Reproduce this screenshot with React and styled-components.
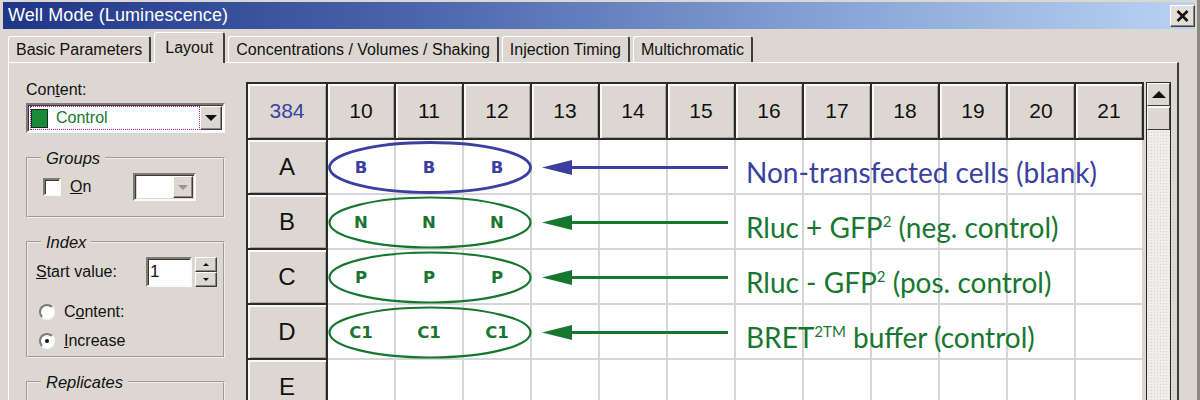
import styled, { createGlobalStyle } from 'styled-components';

const GlobalStyle = createGlobalStyle`
  body {
    margin: 0;
    background: #dcd8d1;
    font-family: "Liberation Sans", Arial, sans-serif;
  }
`;

const BG = '#dcd8d1';
const BLUE = '#3b40a0';
const GREEN = '#17772f';

const Window = styled.div`
  width: 1200px;
  height: 400px;
  box-sizing: border-box;
  overflow: hidden;
  background: ${BG};
  padding: 2px 2px 0 3px;
  border-right: 3px solid #8d8a84;
`;

const TitleBar = styled.div`
  height: 27px;
  display: flex;
  align-items: center;
  justify-content: space-between;
  padding: 0 0 0 5px;
  background: linear-gradient(to right, #1f3587 0%, #4a66ad 35%, #86a5d6 70%, #bad2f2 100%);
`;

const Title = styled.span`
  color: #fff;
  font-size: 18px;
  letter-spacing: 0.1px;
`;

const CloseButton = styled.div`
  width: 25px;
  height: 22px;
  box-sizing: border-box;
  background: #e2dfd8;
  border: 1px solid;
  border-color: #fff #404040 #404040 #fff;
  box-shadow: inset -1px -1px 0 #8a8680;
  display: flex;
  align-items: center;
  justify-content: center;
`;

const TabStrip = styled.div`
  height: 33px;
  display: flex;
  align-items: flex-end;
  gap: 3px;
  padding-left: 5px;
`;

const Tab = styled.div`
  height: ${(p) => (p.$active ? '31px' : '26px')};
  box-sizing: border-box;
  padding: 0 ${(p) => (p.$active ? '10px' : '7px')};
  display: flex;
  align-items: center;
  font-size: 16px;
  color: #111;
  background: ${BG};
  border-top: 1px solid #fff;
  border-left: 1px solid #fff;
  border-right: 2px solid #3d3d3d;
  border-radius: 3px 3px 0 0;
  position: relative;
  margin-bottom: ${(p) => (p.$active ? '-1px' : '0')};
  z-index: ${(p) => (p.$active ? 1 : 0)};
`;

const Panel = styled.div`
  margin-left: 5px;
  width: 1171px;
  height: 400px;
  box-sizing: border-box;
  border-top: 1px solid #fff;
  border-left: 1px solid #fff;
  border-right: 2px solid #3d3d3d;
  display: flex;
`;

const Sidebar = styled.div`
  width: 237px;
  flex-shrink: 0;
  box-sizing: border-box;
  padding: 18px 0 0 17px;
  display: flex;
  flex-direction: column;
  font-size: 16px;
  color: #111;
`;

const FieldLabel = styled.div`
  line-height: 18px;
`;

const Sunken = styled.div`
  box-sizing: border-box;
  background: #fff;
  border: 2px solid;
  border-color: #7d7a75 #fbfaf8 #fbfaf8 #7d7a75;
  box-shadow: inset 1px 1px 0 #3a3a3a;
`;

const ComboBox = styled(Sunken)`
  margin-top: ${(p) => p.$mt || 0}px;
  margin-left: ${(p) => p.$ml || 0}px;
  width: ${(p) => p.$width}px;
  height: ${(p) => p.$height}px;
  display: flex;
  padding: 1px 1px 1px 2px;
  background: ${(p) => (p.$disabled ? BG : '#fff')};
`;

const ComboField = styled.div`
  flex: 1;
  display: flex;
  align-items: center;
  gap: 8px;
  background: #fff;
  outline: ${(p) => (p.$focus ? '1px dotted #b01ab0' : 'none')};
  outline-offset: -1px;
  padding-left: 1px;
  color: ${GREEN};
  font-size: 16px;
`;

const Swatch = styled.span`
  width: 17px;
  height: 19px;
  background: #198a3a;
  border: 1px solid #1b2b1b;
  box-sizing: border-box;
`;

const ArrowButton = styled.div`
  width: ${(p) => p.$w || 22}px;
  box-sizing: border-box;
  background: ${BG};
  border: 1px solid;
  border-color: #fff #3d3d3d #3d3d3d #fff;
  box-shadow: inset -1px -1px 0 #8a8680;
  display: flex;
  align-items: center;
  justify-content: center;
`;

const DownTriangle = styled.span`
  width: 0;
  height: 0;
  border-left: ${(p) => p.$s || 6}px solid transparent;
  border-right: ${(p) => p.$s || 6}px solid transparent;
  border-top: ${(p) => p.$s || 6}px solid ${(p) => p.$color || '#111'};
`;

const UpTriangle = styled.span`
  width: 0;
  height: 0;
  border-left: ${(p) => p.$s || 6}px solid transparent;
  border-right: ${(p) => p.$s || 6}px solid transparent;
  border-bottom: ${(p) => p.$s || 6}px solid ${(p) => p.$color || '#111'};
`;

const GroupBox = styled.fieldset`
  margin: ${(p) => p.$top}px 0 0 0;
  width: 199px;
  box-sizing: border-box;
  padding: 0;
  border: 2px groove #f1eee9;
  min-width: 0;
`;

const Legend = styled.legend`
  margin-left: 13px;
  padding: 0 5px;
  font-style: italic;
  font-size: 16.5px;
  line-height: 18px;
  color: #111;
`;

const GroupRow = styled.div`
  display: flex;
  align-items: center;
  padding: ${(p) => p.$pad};
  gap: ${(p) => p.$gap || 0}px;
`;

const CheckBox = styled(Sunken)`
  width: 18px;
  height: 18px;
`;

const RowLabel = styled.span`
  margin-left: ${(p) => p.$ml || 0}px;
  margin-right: ${(p) => p.$mr || 0}px;
`;

const SpinInput = styled(Sunken)`
  width: 46px;
  height: 30px;
  display: flex;
  align-items: center;
  padding-left: 2px;
  font-size: 17px;
`;

const SpinButtons = styled.div`
  margin-left: 3px;
  display: flex;
  flex-direction: column;
  width: 22px;
  height: 30px;
`;

const SpinButton = styled(ArrowButton)`
  flex: 1;
  width: 22px;
`;

const Radio = styled.span`
  width: 16px;
  height: 16px;
  box-sizing: border-box;
  border-radius: 50%;
  background: #fff;
  border: 2px solid;
  border-color: #7d7a75 #fbfaf8 #fbfaf8 #7d7a75;
  display: flex;
  align-items: center;
  justify-content: center;
  &::after {
    content: '';
    width: 4px;
    height: 4px;
    border-radius: 50%;
    background: ${(p) => (p.$checked ? '#111' : 'transparent')};
  }
`;

const GridArea = styled.div`
  margin-top: 19px;
  display: flex;
  align-items: flex-start;
`;

const Plate = styled.div`
  position: relative;
  display: grid;
  grid-template-columns: 80px repeat(12, 68px);
  grid-template-rows: 56px repeat(5, 55px);
  border-top: 2px solid #2b2b2b;
  border-left: 2px solid #2b2b2b;
`;

const HeadCell = styled.div`
  box-sizing: border-box;
  background: ${BG};
  border-right: 2px solid #2b2b2b;
  border-bottom: 2px solid #2b2b2b;
  box-shadow: inset 2px 2px 0 #faf9f6, inset -1px -1px 0 #aaa6a0;
  display: flex;
  align-items: center;
  justify-content: center;
  font-size: ${(p) => (p.$row ? 24 : 21)}px;
  color: ${(p) => p.$color || '#111'};
`;

const WellCell = styled.div`
  box-sizing: border-box;
  background: #fff;
  border-right: 2px solid #d6d6d6;
  border-bottom: 2px solid #d6d6d6;
  display: flex;
  align-items: center;
  justify-content: center;
  font-family: "DejaVu Sans", Verdana, sans-serif;
  font-weight: bold;
  font-size: 16.5px;
  padding-top: 2px;
  color: ${(p) => p.$color};
`;

const Annotations = styled.div`
  position: absolute;
  top: 56px;
  left: 80px;
  display: flex;
  flex-direction: column;
  pointer-events: none;
`;

const AnnotationRow = styled.div`
  height: 55px;
  display: flex;
  align-items: center;
`;

const Label = styled.span`
  padding-left: 18px;
  padding-top: 8px;
  font-family: Lato, "Open Sans", sans-serif;
  font-size: 28px;
  color: ${(p) => p.$color};
  white-space: nowrap;
  sup {
    font-size: 15px;
    vertical-align: 11px;
    line-height: 0;
  }
`;

const ScrollBar = styled.div`
  margin-left: 2px;
  width: 25px;
  height: 330px;
  box-sizing: border-box;
  border: 1px solid #2b2b2b;
  border-bottom: none;
  display: flex;
  flex-direction: column;
  background-color: #efede9;
  background-image: radial-gradient(#d6d2cb 0.6px, transparent 0.8px);
  background-size: 3px 3px;
`;

const ScrollButton = styled.div`
  height: 23px;
  box-sizing: border-box;
  background: ${BG};
  border: 1px solid;
  border-color: #fff #3d3d3d #3d3d3d #fff;
  display: flex;
  align-items: center;
  justify-content: center;
  margin-bottom: 1px;
`;

const columns = [10, 11, 12, 13, 14, 15, 16, 17, 18, 19, 20, 21];
const rows = [
  { id: 'A', mark: 'B', color: BLUE, label: <>Non-transfected cells (blank)</> },
  { id: 'B', mark: 'N', color: GREEN, label: <>Rluc + GFP<sup>2</sup> (neg. control)</> },
  { id: 'C', mark: 'P', color: GREEN, label: <>Rluc - GFP<sup>2</sup> (pos. control)</> },
  { id: 'D', mark: 'C1', color: GREEN, label: <>BRET<sup>2TM</sup> buffer (control)</> },
  { id: 'E' },
];

const Marker = ({ color, thick }) => (
  <svg width="400" height="55" viewBox="0 0 400 55">
    <ellipse cx="102" cy="27.5" rx="100.5" ry="25" fill="none" stroke={color} strokeWidth={thick ? 2.8 : 2.2} />
    <polygon points="214,27.5 244,20 244,35" fill={color} />
    <line x1="240" y1="27.5" x2="400" y2="27.5" stroke={color} strokeWidth="3" />
  </svg>
);

const App = () => {
  return (
    <Window>
      <GlobalStyle />
      <TitleBar>
        <Title>Well Mode (Luminescence)</Title>
        <CloseButton>
          <svg width="13" height="12" viewBox="0 0 13 12">
            <path d="M1.5 1 L11.5 11 M11.5 1 L1.5 11" stroke="#111" strokeWidth="2.6" />
          </svg>
        </CloseButton>
      </TitleBar>

      <TabStrip>
        <Tab>Basic Parameters</Tab>
        <Tab $active>Layout</Tab>
        <Tab>Concentrations / Volumes / Shaking</Tab>
        <Tab>Injection Timing</Tab>
        <Tab>Multichromatic</Tab>
      </TabStrip>

      <Panel>
        <Sidebar>
          <FieldLabel>
            Con<u>t</u>ent:
          </FieldLabel>
          <ComboBox $width={199} $height={30} $mt={4}>
            <ComboField $focus>
              <Swatch />
              Control
            </ComboField>
            <ArrowButton>
              <DownTriangle $s={6} />
            </ArrowButton>
          </ComboBox>

          <GroupBox $top={16}>
            <Legend>Groups</Legend>
            <GroupRow $pad="6px 0 15px 15px">
              <CheckBox />
              <RowLabel $ml={9}>
                <u>O</u>n
              </RowLabel>
              <ComboBox $width={63} $height={28} $ml={42} $disabled>
                <ComboField />
                <ArrowButton $w={20}>
                  <DownTriangle $s={5} $color="#9a968f" />
                </ArrowButton>
              </ComboBox>
            </GroupRow>
          </GroupBox>

          <GroupBox $top={15}>
            <Legend>Index</Legend>
            <GroupRow $pad="6px 0 0 8px">
              <RowLabel $mr={29}>
                <u>S</u>tart value:
              </RowLabel>
              <SpinInput>1</SpinInput>
              <SpinButtons>
                <SpinButton>
                  <UpTriangle $s={3} />
                </SpinButton>
                <SpinButton>
                  <DownTriangle $s={3} />
                </SpinButton>
              </SpinButtons>
            </GroupRow>
            <GroupRow $pad="16px 0 0 11px" $gap={9}>
              <Radio />
              <span>
                C<u>o</u>ntent:
              </span>
            </GroupRow>
            <GroupRow $pad="11px 0 6px 11px" $gap={9}>
              <Radio $checked />
              <span>
                <u>I</u>ncrease
              </span>
            </GroupRow>
          </GroupBox>

          <GroupBox $top={15}>
            <Legend>Replicates</Legend>
            <GroupRow $pad="20px 0 20px 0" />
          </GroupBox>
        </Sidebar>

        <GridArea>
          <Plate>
            <HeadCell $color={BLUE}>384</HeadCell>
            {columns.map((c) => (
              <HeadCell key={c}>{c}</HeadCell>
            ))}
            {rows.map((r) => [
              <HeadCell key={r.id} $row>
                {r.id}
              </HeadCell>,
              ...columns.map((c) => (
                <WellCell key={r.id + c} $color={r.color}>
                  {r.mark && c <= 12 ? r.mark : ''}
                </WellCell>
              )),
            ])}
            <Annotations>
              {rows
                .filter((r) => r.mark)
                .map((r) => (
                  <AnnotationRow key={r.id}>
                    <Marker color={r.color} thick={r.id === 'A'} />
                    <Label $color={r.color}>{r.label}</Label>
                  </AnnotationRow>
                ))}
            </Annotations>
          </Plate>
          <ScrollBar>
            <ScrollButton>
              <UpTriangle $s={7} />
            </ScrollButton>
            <ScrollButton />
          </ScrollBar>
        </GridArea>
      </Panel>
    </Window>
  );
};

export default App;
